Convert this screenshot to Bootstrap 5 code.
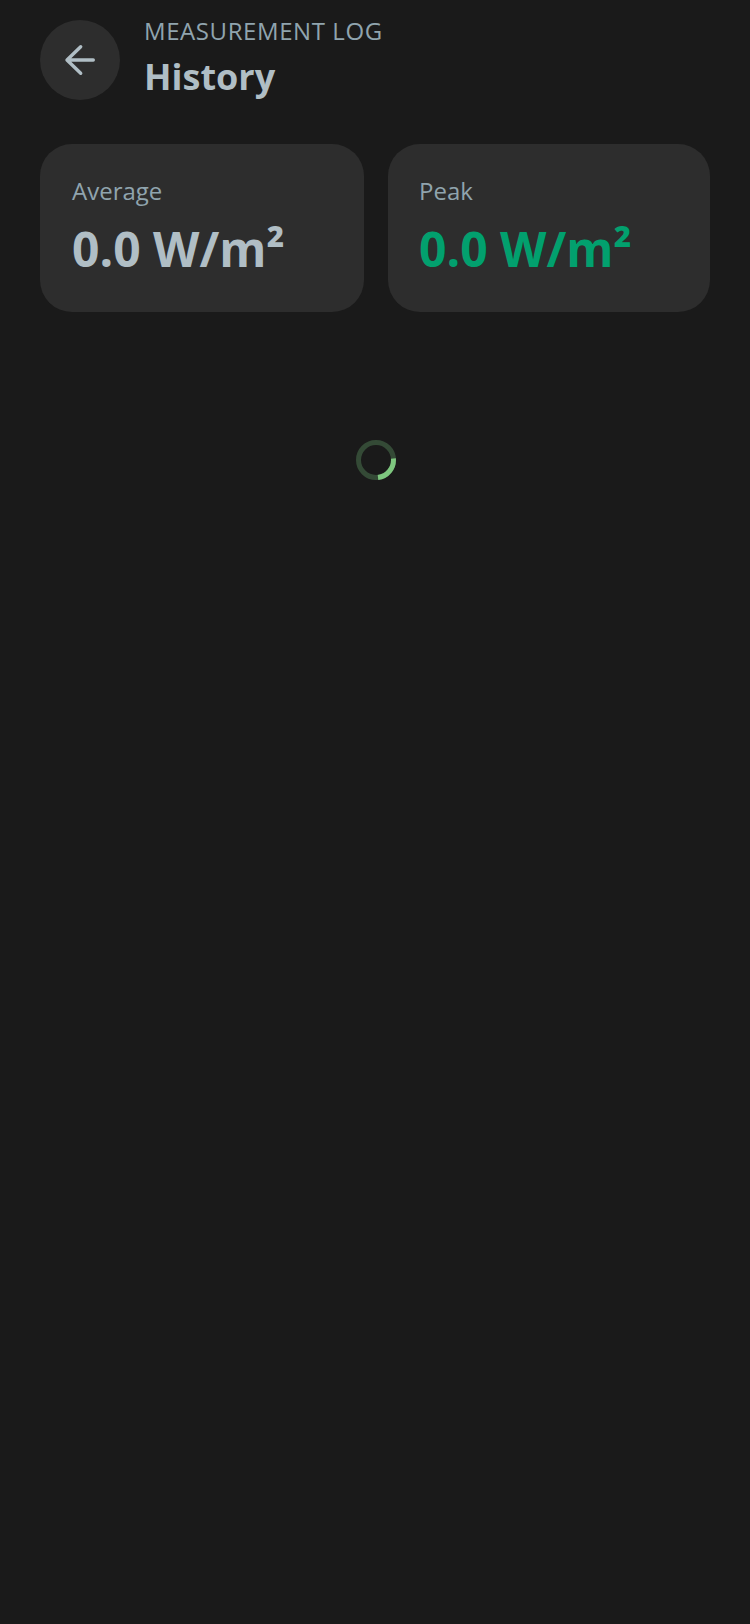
<!DOCTYPE html>
<html lang="en">
<head>
<meta charset="utf-8">
<title>History</title>
<link href="https://cdn.jsdelivr.net/npm/bootstrap@5.3.0/dist/css/bootstrap.min.css" rel="stylesheet">
<style>
html, body { background: #1a1a1a; }
body { font-family: "Open Sans", sans-serif; min-height: 1624px; }
.page-shell { padding: 20px 40px 0 40px; }
.head-row { gap: 24px; }
.back-disc { width: 80px; height: 80px; background: #2d2d2d; border: 0; }
.eyebrow { font-size: 24px; line-height: 24px; color: #90a4ae; letter-spacing: 0.58px; margin-top: -1px; }
.page-title { font-size: 36px; line-height: 48px; font-weight: 700; color: #b0bec5; margin: 10px 0 0; }
.stat-grid { display: grid; grid-template-columns: 324px 322px; column-gap: 24px; margin-top: 43px; }
.stat-tile { height: 168px; background: #2d2d2d; border-radius: 32px; padding: 31px 32px; }
.stat-tile-right { padding-left: 31px; }
.stat-label { font-size: 24px; line-height: 32px; color: #90a4ae; }
.stat-value { font-size: 48px; line-height: 64px; font-weight: 700; color: #b0bec5; margin-top: 10px; }
.stat-peak { color: #02a06e; }
.spin-wrap { margin-top: 128px; padding-left: 2px; }
</style>
</head>
<body>
<div class="page-shell">
  <div class="head-row d-flex align-items-start">
    <button type="button" class="back-disc rounded-circle d-flex align-items-center justify-content-center p-0" aria-label="Back">
      <svg width="32" height="32" viewBox="0 0 32 32" fill="none" stroke="#b0bec5" stroke-width="3.400" stroke-linecap="round" stroke-linejoin="round"><path d="M29.300 16H3.500M16.700 2.700L3 16l13.700 13.300"/></svg>
    </button>
    <div>
      <div class="eyebrow">MEASUREMENT LOG</div>
      <h1 class="page-title">History</h1>
    </div>
  </div>
  <div class="stat-grid">
    <div class="stat-tile">
      <div class="stat-label">Average</div>
      <div class="stat-value">0.0 W/m²</div>
    </div>
    <div class="stat-tile stat-tile-right">
      <div class="stat-label">Peak</div>
      <div class="stat-value stat-peak">0.0 W/m²</div>
    </div>
  </div>
  <div class="spin-wrap d-flex justify-content-center">
    <svg width="40" height="40" viewBox="0 0 40 40" fill="none">
      <circle cx="20" cy="20" r="17.500" stroke="#344a36" stroke-width="5"/>
      <path d="M37.400 18.500A17.500 17.500 0 0 1 22 37.400" stroke="#7ec77f" stroke-width="5"/>
    </svg>
  </div>
</div>
<script src="https://cdn.jsdelivr.net/npm/bootstrap@5.3.0/dist/js/bootstrap.bundle.min.js"></script>
</body>
</html>
